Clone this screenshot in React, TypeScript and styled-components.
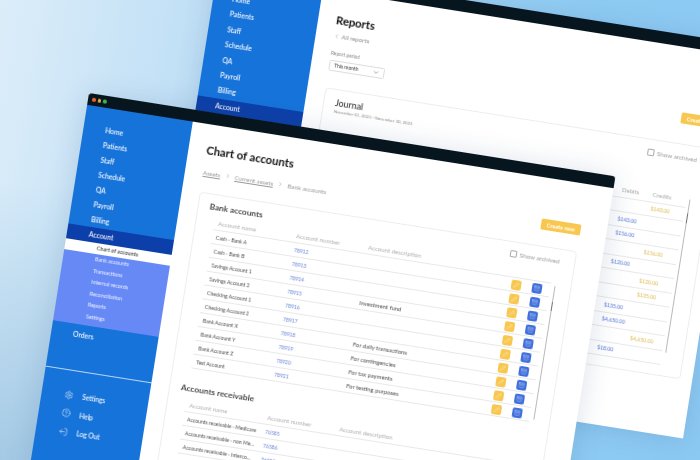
import React from "react";
import styled, { createGlobalStyle } from "styled-components";
import {
  Archive,
  ChevronDown,
  ChevronLeft,
  ChevronRight,
  CircleHelp,
  LogOut,
  Pencil,
  Settings,
} from "lucide-react";

const GlobalStyle = createGlobalStyle`
  html, body { margin: 0; padding: 0; }
  body { font-family: "Lato", "Open Sans", sans-serif; }
`;

const Desktop = styled.div`
  position: relative;
  width: 700px;
  height: 460px;
  overflow: hidden;
  background:
    radial-gradient(320px 280px at 0% 100%, rgba(110, 165, 205, 0.45), transparent),
    linear-gradient(100deg, #dcedf9 0%, #b9dcf5 32%, #8ecbf3 75%, #8cc9f2 100%);
`;

const Window = styled.div<{ $left: number; $top: number; $height: number }>`
  position: absolute;
  left: ${(p) => p.$left}px;
  top: ${(p) => p.$top}px;
  width: 533px;
  height: ${(p) => p.$height}px;
  display: flex;
  flex-direction: column;
  background: #fff;
  transform: rotate(9deg);
  transform-origin: 0 0;
  box-shadow: 0 2px 26px rgba(30, 70, 120, 0.16);
  filter: blur(0.3px);
`;

const TitleBar = styled.div`
  flex: 0 0 12px;
  display: flex;
  align-items: center;
  gap: 2px;
  padding-left: 4px;
  background: #07151f;
  border-radius: 3px 3px 0 0;
`;

const Light = styled.span<{ $color: string }>`
  width: 3.5px;
  height: 3.5px;
  border-radius: 50%;
  background: ${(p) => p.$color};
`;

const Body = styled.div`
  flex: 1;
  display: flex;
  min-height: 0;
`;

const Sidebar = styled.nav<{ $pad: number }>`
  flex: 0 0 107px;
  padding-top: ${(p) => p.$pad}px;
  background: #1673da;
  color: #fff;
`;

const NavItem = styled.div<{ $step: number; $left: number; $active?: boolean }>`
  height: ${(p) => p.$step}px;
  line-height: ${(p) => p.$step}px;
  padding-left: ${(p) => p.$left}px;
  font-size: 6.8px;
  font-weight: 500;
  background: ${(p) => (p.$active ? "#0c3fa9" : "transparent")};
`;

const SubActive = styled.div`
  height: 11.5px;
  line-height: 11.5px;
  padding-left: 32px;
  font-size: 5.4px;
  color: #222;
  background: #fff;
`;

const SubMenu = styled.div`
  height: 72px;
  background: #6789f6;
  margin-bottom: 3px;
`;

const SubItem = styled.div`
  height: 11.6px;
  line-height: 11.6px;
  padding-left: 32px;
  font-size: 5.4px;
  color: #eef2ff;
`;

const Divider = styled.div`
  height: 1px;
  margin-top: 28px;
  background: #b8d6f6;
`;

const FooterList = styled.div`
  padding: 15px 0 0 23px;
`;

const FooterRow = styled.div`
  height: 18.5px;
  display: flex;
  align-items: center;
  gap: 9px;
  font-size: 6.6px;
  font-weight: 500;
  svg {
    width: 9px;
    height: 9px;
    stroke-width: 1.4;
  }
`;

const FlippedLogOut = styled(LogOut)`
  transform: scaleX(-1);
`;

const Main = styled.main<{ $top: number; $right: number }>`
  flex: 1;
  min-width: 0;
  padding: ${(p) => p.$top}px ${(p) => p.$right}px 0 18px;
`;

const Header = styled.header`
  display: flex;
  justify-content: space-between;
  align-items: flex-end;
`;

const Title = styled.h1`
  margin: 0;
  font-size: 11.3px;
  line-height: 16px;
  font-weight: 700;
  color: #111;
`;

const Breadcrumbs = styled.div`
  display: flex;
  align-items: center;
  gap: 4px;
  height: 10px;
  margin-top: 9px;
  font-size: 6.2px;
  color: #999;
  svg {
    width: 6.5px;
    height: 6.5px;
  }
`;

const Crumb = styled.span<{ $link?: boolean }>`
  text-decoration: ${(p) => (p.$link ? "underline" : "none")};
`;

const CreateButton = styled.div<{ $bottom: number }>`
  width: 40px;
  height: 11px;
  margin-bottom: ${(p) => p.$bottom}px;
  border-radius: 1.5px;
  background: #f8c74f;
  color: #fff;
  font-size: 5.6px;
  font-weight: 700;
  line-height: 11px;
  text-align: center;
`;

const BackLink = styled.div`
  display: flex;
  align-items: center;
  gap: 2px;
  height: 9px;
  margin-top: 3px;
  font-size: 6.2px;
  color: #8d8d8d;
  svg {
    width: 6px;
    height: 6px;
  }
`;

const FieldLabel = styled.div`
  height: 8px;
  margin-top: 9px;
  font-size: 4.8px;
  line-height: 8px;
  color: #888;
`;

const Select = styled.div`
  width: 56px;
  height: 11px;
  margin-top: 2.5px;
  padding: 0 4px;
  box-sizing: border-box;
  display: flex;
  align-items: center;
  justify-content: space-between;
  border: 0.6px solid #ddd;
  border-radius: 1.5px;
  font-size: 5px;
  color: #333;
  svg {
    width: 7px;
    height: 7px;
    color: #666;
  }
`;

const Card = styled.section<{ $height: number; $mt: number; $pt: number; $pr: number }>`
  box-sizing: border-box;
  height: ${(p) => p.$height}px;
  margin-top: ${(p) => p.$mt}px;
  padding: ${(p) => p.$pt}px ${(p) => p.$pr}px 0 11px;
  border: 0.8px solid #ededed;
  border-radius: 4px;
`;

const CardHead = styled.div`
  display: flex;
  justify-content: space-between;
  align-items: flex-start;
  height: 12px;
`;

const JournalHead = styled(CardHead)`
  height: auto;
`;

const Heading = styled.h2`
  margin: 0;
  font-size: 8.4px;
  line-height: 12px;
  font-weight: 600;
  color: #333;
`;

const Archived = styled.label`
  display: flex;
  align-items: center;
  gap: 3px;
  margin-top: 2px;
  font-size: 6.3px;
  color: #9c9c9c;
`;

const CheckBox = styled.span`
  width: 5px;
  height: 5px;
  border: 0.6px solid #a8a8a8;
  border-radius: 1px;
`;

const TableWrap = styled.div`
  display: flex;
  gap: 4px;
  margin-top: 3px;
`;

const Rows = styled.div`
  flex: 1;
  min-width: 0;
`;

const AccountRow = styled.div<{ $muted?: boolean }>`
  display: grid;
  grid-template-columns: 79px 73px 1fr 10px 21px;
  align-items: center;
  height: 14px;
  margin-left: 7px;
  padding-left: 4px;
  padding-right: 8px;
  border-bottom: 0.6px solid #e8e8e8;
  box-sizing: border-box;
  font-size: ${(p) => (p.$muted ? "6.1px" : "5.1px")};
  color: ${(p) => (p.$muted ? "#b0b0b0" : "#4c4c4c")};
  white-space: nowrap;
`;

const FixedName = styled.span`
  overflow: hidden;
  text-overflow: ellipsis;
  padding-right: 8px;
`;

const Num = styled.span`
  color: #6a86d8;
`;

const Desc = styled.span`
  font-size: 5.9px;
  color: #4c4c4c;
`;

const ActionIcon = styled.span<{ $color: string; $shift: number }>`
  width: 10px;
  height: 10px;
  margin-left: ${(p) => p.$shift}px;
  display: flex;
  align-items: center;
  justify-content: center;
  border-radius: 2px;
  background: ${(p) => p.$color};
  svg {
    width: 6px;
    height: 6px;
    stroke-width: 1.6;
    color: rgba(255, 255, 255, 0.75);
  }
`;

const ScrollTrack = styled.div<{ $height: number; $mt: number; $thumbTop: number; $thumb: number }>`
  flex: 0 0 1px;
  height: ${(p) => p.$height}px;
  margin-top: ${(p) => p.$mt}px;
  background: linear-gradient(
    #b9b9b9 0,
    #b9b9b9 ${(p) => p.$thumbTop}px,
    #6f6f6f ${(p) => p.$thumbTop}px,
    #6f6f6f ${(p) => p.$thumbTop + p.$thumb}px,
    #b9b9b9 ${(p) => p.$thumbTop + p.$thumb}px
  );
`;

const ReceivableHeading = styled(Heading)`
  margin-top: 14px;
  margin-bottom: 4px;
`;

const JournalTitle = styled.h2`
  margin: 0;
  font-size: 8.8px;
  line-height: 12px;
  font-weight: 500;
  color: #333;
`;

const JournalDates = styled.div`
  margin-top: 0.5px;
  font-size: 4.3px;
  line-height: 6px;
  color: #8a8a8a;
`;

const JournalTable = styled.div`
  display: flex;
  gap: 3px;
  margin-top: 22px;
`;

const JournalRow = styled.div<{ $head?: boolean }>`
  display: grid;
  grid-template-columns: 1fr 31px 34px;
  align-items: center;
  height: 14.5px;
  box-sizing: border-box;
  border-bottom: 0.6px solid #e8e8e8;
  font-size: ${(p) => (p.$head ? "6px" : "5.2px")};
  color: #a9a9a9;
`;

const HeadCell = styled.span<{ $col: number }>`
  grid-column: ${(p) => p.$col};
`;

const Debit = styled.span`
  color: #5275d4;
  grid-column: 2;
`;

const Credit = styled.span`
  color: #dcb94f;
  grid-column: 3;
`;

const mainNav = ["Home", "Patients", "Staff", "Schedule", "QA", "Payroll", "Billing"];
const subNav = ["Bank accounts", "Transactions", "Internal records", "Reconciliation", "Reports", "Settings"];

const bankRows = [
  ["Cash - Bank A", "78912", ""],
  ["Cash - Bank B", "78913", ""],
  ["Savings Account 1", "78914", ""],
  ["Savings Account 2", "78915", "Investment fund"],
  ["Checking Account 1", "78916", ""],
  ["Checking Account 2", "78917", ""],
  ["Bank Account X", "78918", "For daily transactions"],
  ["Bank Account Y", "78919", "For contingencies"],
  ["Bank Account Z", "78920", "For tax payments"],
  ["Test Account", "78921", "For testing purposes"],
];

const receivableRows = [
  ["Accounts receivable - Medicare", "76585"],
  ["Accounts receivable - non Medicare", "76586"],
  ["Accounts receivable - Intercompany", "76587"],
];

const journalRows = [
  ["", "$143.00"],
  ["$143.00", ""],
  ["$156.00", ""],
  ["", "$156.00"],
  ["$120.00", ""],
  ["", "$120.00"],
  ["", "$135.00"],
  ["$135.00", ""],
  ["$4,650.00", ""],
  ["", "$4,650.00"],
  ["$18.00", ""],
];

function TableHead() {
  return (
    <AccountRow $muted>
      <span>Account name</span>
      <span>Account number</span>
      <span>Account description</span>
    </AccountRow>
  );
}

function App() {
  return (
    <Desktop>
      <GlobalStyle />

      <Window $left={219} $top={-39} $height={399}>
        <TitleBar />
        <Body>
          <Sidebar $pad={16}>
            {mainNav.map((n) => (
              <NavItem key={n} $step={15.4} $left={19}>
                {n}
              </NavItem>
            ))}
            <NavItem $step={15.4} $left={19} $active>
              Account
            </NavItem>
          </Sidebar>
          <Main $top={20} $right={12}>
            <Header>
              <div>
                <Title>Reports</Title>
                <BackLink>
                  <ChevronLeft />
                  All reports
                </BackLink>
                <FieldLabel>Report period</FieldLabel>
                <Select>
                  This month
                  <ChevronDown />
                </Select>
              </div>
              <CreateButton $bottom={2.5}>Create new</CreateButton>
            </Header>
            <Card $height={233} $mt={17} $pt={7} $pr={17}>
              <JournalHead>
                <div>
                  <JournalTitle>Journal</JournalTitle>
                  <JournalDates>November 01, 2023 - November 30, 2023</JournalDates>
                </div>
                <Archived>
                  <CheckBox />
                  Show archived
                </Archived>
              </JournalHead>
              <JournalTable>
                <Rows>
                  <JournalRow $head>
                    <HeadCell $col={2}>Debits</HeadCell>
                    <HeadCell $col={3}>Credits</HeadCell>
                  </JournalRow>
                  {journalRows.map(([d, c], i) => (
                    <JournalRow key={i}>
                      {d && <Debit>{d}</Debit>}
                      {c && <Credit>{c}</Credit>}
                    </JournalRow>
                  ))}
                </Rows>
                <ScrollTrack $height={155} $mt={6} $thumbTop={14} $thumb={10} />
              </JournalTable>
            </Card>
          </Main>
        </Body>
      </Window>

      <Window $left={89} $top={93} $height={420}>
        <TitleBar>
          <Light $color="#e8662e" />
          <Light $color="#eeb13a" />
          <Light $color="#3fb950" />
        </TitleBar>
        <Body>
          <Sidebar $pad={14.5}>
            {mainNav.map((n) => (
              <NavItem key={n} $step={15} $left={22}>
                {n}
              </NavItem>
            ))}
            <NavItem $step={15} $left={22} $active>
              Account
            </NavItem>
            <SubActive>Chart of accounts</SubActive>
            <SubMenu>
              {subNav.map((n) => (
                <SubItem key={n}>{n}</SubItem>
              ))}
            </SubMenu>
            <NavItem $step={15} $left={22}>
              Orders
            </NavItem>
            <Divider />
            <FooterList>
              <FooterRow>
                <Settings />
                Settings
              </FooterRow>
              <FooterRow>
                <CircleHelp />
                Help
              </FooterRow>
              <FooterRow>
                <FlippedLogOut />
                Log Out
              </FooterRow>
            </FooterList>
          </Sidebar>
          <Main $top={18} $right={26}>
            <Header>
              <div>
                <Title>Chart of accounts</Title>
                <Breadcrumbs>
                  <Crumb $link>Assets</Crumb>
                  <ChevronRight />
                  <Crumb $link>Current assets</Crumb>
                  <ChevronRight />
                  <Crumb>Bank accounts</Crumb>
                </Breadcrumbs>
              </div>
              <CreateButton $bottom={1}>Create new</CreateButton>
            </Header>
            <Card $height={400} $mt={15} $pt={6} $pr={15}>
              <CardHead>
                <Heading>Bank accounts</Heading>
                <Archived>
                  <CheckBox />
                  Show archived
                </Archived>
              </CardHead>
              <TableWrap>
                <Rows>
                  <TableHead />
                  {bankRows.map(([name, num, desc]) => (
                    <AccountRow key={name}>
                      <FixedName>{name}</FixedName>
                      <Num>{num}</Num>
                      <Desc>{desc}</Desc>
                      <ActionIcon $color="#f8c74f" $shift={0}>
                        <Pencil />
                      </ActionIcon>
                      <ActionIcon $color="#3f6fdc" $shift={11}>
                        <Archive />
                      </ActionIcon>
                    </AccountRow>
                  ))}
                </Rows>
                <ScrollTrack $height={135} $mt={15.5} $thumbTop={16} $thumb={9} />
              </TableWrap>
              <ReceivableHeading>Accounts receivable</ReceivableHeading>
              <Rows>
                <TableHead />
                {receivableRows.map(([name, num]) => (
                  <AccountRow key={name}>
                    <FixedName>{name}</FixedName>
                    <Num>{num}</Num>
                  </AccountRow>
                ))}
              </Rows>
            </Card>
          </Main>
        </Body>
      </Window>
    </Desktop>
  );
}

export default App;
